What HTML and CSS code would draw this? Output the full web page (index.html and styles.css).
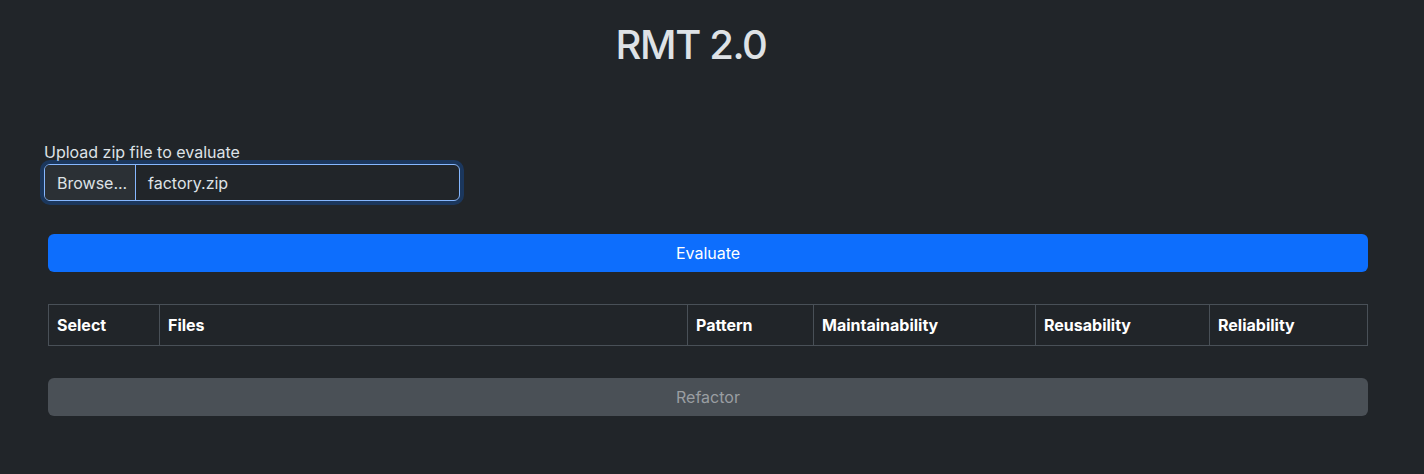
FILE: index.html
```html
<!DOCTYPE html>
<html lang="en">
<head>
<meta charset="utf-8">
<title>RMT 2.0</title>
<link rel="stylesheet" href="styles.css">
</head>
<body>
<main class="page">
  <h1 class="title">RMT 2.0</h1>
  <form class="upload">
    <label class="upload-label">Upload zip file to evaluate</label>
    <div class="file-input">
      <span class="file-btn">Browse...</span>
      <span class="file-name">factory.zip</span>
    </div>
  </form>
  <button class="btn btn-primary" type="button">Evaluate</button>
  <table class="results">
    <thead>
      <tr>
        <th class="c-select">Select</th>
        <th class="c-files">Files</th>
        <th class="c-pattern">Pattern</th>
        <th class="c-maint">Maintainability</th>
        <th class="c-reuse">Reusability</th>
        <th class="c-rel">Reliability</th>
      </tr>
    </thead>
  </table>
  <button class="btn btn-disabled" type="button" disabled>Refactor</button>
</main>
</body>
</html>
```
FILE: styles.css
```css
* { box-sizing: border-box; }
html, body {
  margin: 0;
  background: #212529;
  color: #dee2e6;
  font-family: Inter, "Noto Sans", "Liberation Sans", sans-serif;
  font-size: 16px;
  line-height: 1.5;
}
.page {
  display: flex;
  flex-direction: column;
  padding: 21px 56px 0 48px;
}
.title {
  margin: 0;
  font-size: 40px;
  line-height: 48px;
  font-weight: 500;
  letter-spacing: -1.4px;
  text-align: center;
  padding-right: 34px;
}
.upload {
  margin: 71px 0 0 -4px;
  display: flex;
  flex-direction: column;
  width: 416px;
}
.upload-label {
  line-height: 24px;
}
.file-input {
  display: flex;
  height: 37px;
  border: 1px solid #86b7fe;
  border-radius: 6px;
  box-shadow: 0 0 0 4px rgba(13, 110, 253, 0.25);
  overflow: hidden;
}
.file-btn {
  display: flex;
  align-items: center;
  padding: 0 12px;
  width: 91px;
  background: #2b3035;
  border-right: 1px solid #86b7fe;
  white-space: nowrap;
}
.file-name {
  display: flex;
  align-items: center;
  padding: 0 12px;
}
.btn {
  display: block;
  width: 100%;
  height: 38px;
  border: 0;
  border-radius: 6px;
  font-family: inherit;
  font-size: 16px;
}
.btn-primary {
  margin-top: 33px;
  background: #0d6efd;
  color: #fff;
}
.btn-disabled {
  margin-top: 32px;
  background: #4a5056;
  color: #9a9ea2;
}
.results {
  margin-top: 32px;
  width: calc(100% - 1px);
  border-collapse: collapse;
  table-layout: fixed;
}
.results th {
  border: 1px solid #495057;
  padding: 8px;
  text-align: left;
  font-weight: 700;
  color: #fff;
  line-height: 24px;
}
.c-select { width: 111px; }
.c-files { width: 528px; }
.c-pattern { width: 126px; }
.c-maint { width: 222px; }
.c-reuse { width: 174px; }
.c-rel { width: 158px; }
```
